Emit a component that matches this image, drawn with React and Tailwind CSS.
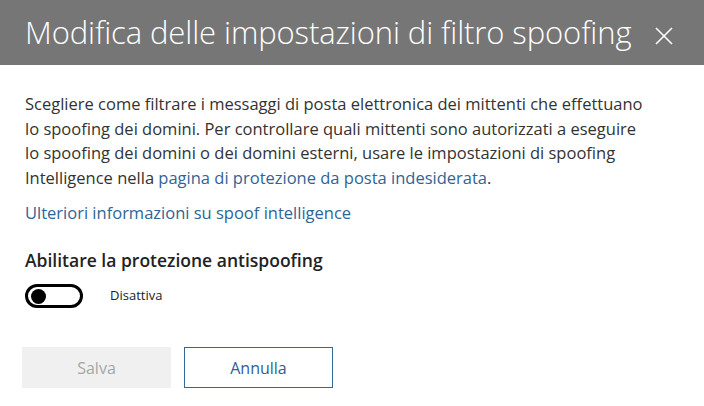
import React, { useState } from 'react';

const App = () => {
  const [enabled, setEnabled] = useState(false);

  return (
    <div className="w-[704px] h-[406px] bg-white overflow-hidden font-['Open_Sans','Noto_Sans',sans-serif]">
      {/* header */}
      <div className="h-[65px] bg-[#767676] flex items-center justify-between pl-[25px] pr-[30px]">
        <h1 className="text-white text-[31px] font-light tracking-[-0.1px] leading-none">
          Modifica delle impostazioni di filtro spoofing
        </h1>
        <button className="text-white mt-[6px]">
          <svg width="20" height="20" viewBox="0 0 20 20" fill="none" stroke="currentColor" strokeWidth="1.6">
            <path d="M2 2L18 18M18 2L2 18" />
          </svg>
        </button>
      </div>

      {/* body */}
      <div className="px-[25px] pt-[27px]">
        <p className="text-[16.5px] leading-[24.5px] text-[#333] w-[622px]">
          Scegliere come filtrare i messaggi di posta elettronica dei mittenti che effettuano lo spoofing dei domini. Per controllare quali mittenti sono autorizzati a eseguire lo spoofing dei domini o dei domini esterni, usare le impostazioni di spoofing Intelligence nella{' '}
          <a href="#" className="text-[#2f6496]">pagina di protezione da posta indesiderata</a>.
        </p>
        <a href="#" className="block mt-[11px] text-[16.5px] leading-[24px] text-[#2f6496]">
          Ulteriori informazioni su spoof intelligence
        </a>

        <h2 className="mt-[23px] text-[17.5px] font-semibold leading-[24px] text-[#222]">
          Abilitare la protezione antispoofing
        </h2>
        <div className="mt-[12px] flex items-center">
          <button
            onClick={() => setEnabled(!enabled)}
            className={`w-[58px] h-[24px] rounded-full border-[3px] border-black flex items-center px-[3px] ${enabled ? 'justify-end' : 'justify-start'}`}
          >
            <span className="w-[15px] h-[15px] rounded-full bg-black" />
          </button>
          <span className="ml-[27px] text-[13px] text-[#222]">{enabled ? 'Attiva' : 'Disattiva'}</span>
        </div>

        <div className="mt-[39px] flex gap-[13px] -ml-[3px]">
          <button disabled className="w-[149px] h-[41px] bg-[#f0f0f0] text-[#a6a6a6] text-[16px]">
            Salva
          </button>
          <button className="w-[149px] h-[41px] border border-[#2f6a9a] text-[#2f5f8f] text-[16px]">
            Annulla
          </button>
        </div>
      </div>
    </div>
  );
};

export default App;
